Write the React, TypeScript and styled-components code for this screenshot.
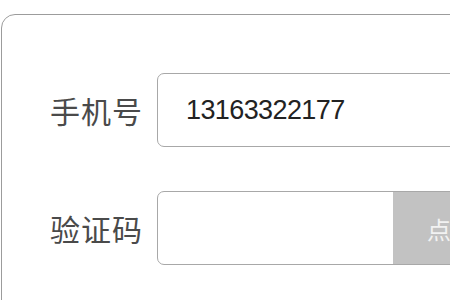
import React from "react";
import styled, { createGlobalStyle } from "styled-components";

const Global = createGlobalStyle`
  html, body { margin: 0; padding: 0; background: #ffffff; overflow: hidden; }
  body { font-family: "Noto Sans CJK SC", "Noto Sans", sans-serif; }
`;

const Card = styled.div`
  margin: 14px 0 0 1px;
  width: 640px;
  height: 400px;
  box-sizing: border-box;
  border: 1.5px solid #9c9c9c;
  border-radius: 14px;
  background: #ffffff;
  padding: 58px 0 0 48px;
  display: flex;
  flex-direction: column;
  gap: 44px;
`;

const Row = styled.div`
  display: flex;
  align-items: center;
  gap: 14px;
`;

const Label = styled.div`
  width: 93px;
  font-family: "Noto Sans CJK SC", "Noto Sans", sans-serif;
  font-size: 30px;
  line-height: 1;
  color: #4a4a4a;
  letter-spacing: 1px;
  white-space: nowrap;
`;

const Field = styled.div`
  display: flex;
  align-items: stretch;
  height: 74px;
  width: 500px;
  box-sizing: border-box;
  border: 1px solid #a8a8a8;
  border-radius: 7px;
  overflow: hidden;
  background: #ffffff;
`;

const Value = styled.div<{ $w?: number }>`
  display: flex;
  align-items: center;
  ${(p) => (p.$w ? `width: ${p.$w}px; flex: none;` : "flex: 1;")}
  padding-left: 28px;
  box-sizing: border-box;
  font-family: "Liberation Sans", Arial, sans-serif;
  font-size: 27px;
  letter-spacing: -0.6px;
  color: #222222;
`;

const CodeButton = styled.div`
  flex: 1;
  display: flex;
  align-items: center;
  padding-left: 34px;
  background: #c2c2c2;
  color: #f2f2f2;
  font-family: "Noto Sans CJK SC", "Noto Sans", sans-serif;
  font-size: 24px;
  white-space: nowrap;
`;

export default function App() {
  return (
    <>
      <Global />
      <Card>
        <Row>
          <Label>手机号</Label>
          <Field>
            <Value>13163322177</Value>
          </Field>
        </Row>
        <Row>
          <Label>验证码</Label>
          <Field>
            <Value $w={235} />
            <CodeButton>点击获取验证码</CodeButton>
          </Field>
        </Row>
      </Card>
    </>
  );
}
